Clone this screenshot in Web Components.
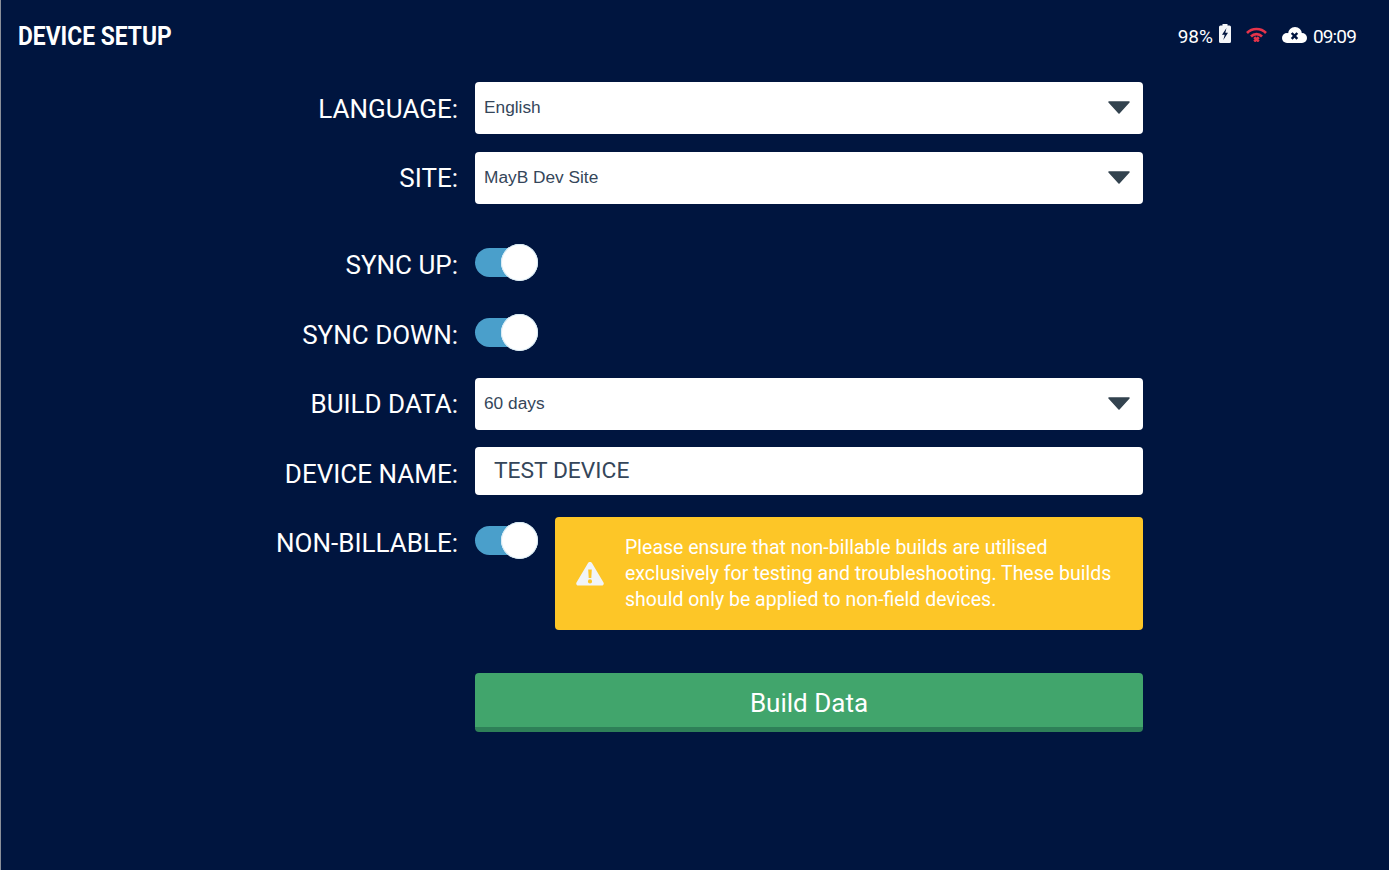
<!DOCTYPE html>
<html>
<head>
<meta charset="utf-8">
<title>Device Setup</title>
<style>
	html, body { margin: 0; height: 100%; }
	body {
		background: #00153f;
		border-left: 1px solid #8a8f99;
		box-sizing: border-box;
		height: 870px;
		overflow: hidden;
		color: #fff;
		font-family: Roboto, "Liberation Sans", sans-serif;
	}
</style>
</head>
<body>
<setup-header title-text="DEVICE SETUP" battery="98%" time="09:09"></setup-header>
<setup-form>
	<form-row label="LANGUAGE:" style="--label-top:1px"><select-box value="English"></select-box></form-row>
	<form-row label="SITE:" style="--row-gap:18px"><select-box value="MayB Dev Site"></select-box></form-row>
	<form-row label="SYNC UP:" style="--row-gap:40px;--label-top:4px"><toggle-switch></toggle-switch></form-row>
	<form-row label="SYNC DOWN:" style="--row-gap:33px;--label-top:4px"><toggle-switch></toggle-switch></form-row>
	<form-row label="BUILD DATA:" style="--row-gap:27px"><select-box value="60 days"></select-box></form-row>
	<form-row label="DEVICE NAME:" style="--row-gap:17px;--label-top:6px"><text-box value="TEST DEVICE"></text-box></form-row>
	<form-row label="NON-BILLABLE:" style="--row-gap:22px;--label-align:start;--label-top:11px">
		<div style="display:flex;align-items:flex-start;gap:17px">
			<toggle-switch style="margin-top:5px"></toggle-switch>
			<warning-box>Please ensure that non-billable builds are utilised exclusively for testing and troubleshooting. These builds should only be applied to non-field devices.</warning-box>
		</div>
	</form-row>
	<form-row style="--row-gap:43px"><build-button>Build Data</build-button></form-row>
</setup-form>
<script>
const html = String.raw;

function define(name, markup, init) {
	const template = document.createElement("template");
	template.innerHTML = markup;
	customElements.define(name, class extends HTMLElement {
		constructor() {
			super();
			this.attachShadow({ mode: "open" });
			this.shadowRoot.appendChild(template.content.cloneNode(true));
		}
		connectedCallback() {
			if (init) init(this, this.shadowRoot);
		}
	});
}

define("setup-header", html`
	<style>
		:host { display: flex; align-items: center; justify-content: space-between; height: 82px; padding: 0 33px 10px 17px; box-sizing: border-box; }
		h1 { margin: 0; font: 700 25.5px Roboto, sans-serif; transform: scaleX(.895); transform-origin: left; white-space: nowrap; }
		.status { display: flex; align-items: center; font-size: 19px; }
		#time { letter-spacing: -.85px; margin-left: 6px; }
		svg { display: block; flex: none; }
	</style>
	<h1 id="title"></h1>
	<div class="status">
		<span id="battery"></span>
		<svg width="12" height="19" viewBox="0 0 12 19" style="margin:-5px 0 0 6px">
			<path fill="#f4f6f9" fill-rule="evenodd" d="M3.500 0h5v1.500h2A1.500 1.500 0 0 1 12 3v14.500a1.500 1.500 0 0 1-1.500 1.500h-9A1.500 1.500 0 0 1 0 17.500V3a1.500 1.500 0 0 1 1.500-1.500h2zM7.500 4 3 10.800h2.700L4.300 16l4.700-7.200H6.300z"/>
		</svg>
		<svg width="21" height="15" viewBox="0 0 21 15" style="margin:-3px 0 0 15px" fill="none" stroke="#e5344a" stroke-width="2.600">
			<path d="M1 6C6 .700 15 .700 20 6"/>
			<path d="M5 9.500C8 6.300 13 6.300 16 9.500"/>
			<path d="M8.200 10.200 12.800 14.500M12.800 10.200 8.200 14.500"/>
		</svg>
		<svg width="25" height="16" viewBox="0 0 25 16" style="margin:-2px 0 0 15px">
			<g fill="#fff"><circle cx="5" cy="11" r="5"/><circle cx="13" cy="7" r="7"/><circle cx="20" cy="11" r="5"/><rect x="5" y="9" width="15" height="7"/></g>
			<path d="M9.700 6 15.300 11.800M15.300 6 9.700 11.800" stroke="#00153f" stroke-width="2.500"/>
		</svg>
		<span id="time"></span>
	</div>
`, (el, root) => {
	root.getElementById("title").textContent = el.getAttribute("title-text");
	root.getElementById("battery").textContent = el.getAttribute("battery");
	root.getElementById("time").textContent = el.getAttribute("time");
});

define("setup-form", html`
	<style>:host { display: block; }</style>
	<slot></slot>
`);

define("form-row", html`
	<style>
		:host { display: grid; grid-template-columns: 457px 668px; column-gap: 17px; margin-top: var(--row-gap, 0); }
		.label { align-self: var(--label-align, center); text-align: right; font-size: 26px; padding-top: var(--label-top, 0); white-space: nowrap; }
	</style>
	<div class="label" id="label"></div>
	<div><slot></slot></div>
`, (el, root) => {
	root.getElementById("label").textContent = el.getAttribute("label") || "";
});

define("select-box", html`
	<style>
		:host { display: flex; align-items: center; justify-content: space-between; height: 52px; box-sizing: border-box; padding: 0 13px 2px 9px; background: #fff; border-radius: 4px; color: #35465a; font: 17.3px "Liberation Sans", Arial, sans-serif; }
		svg { display: block; }
	</style>
	<span id="value"></span>
	<svg width="22" height="13" viewBox="0 0 22 13"><path fill="#33434f" stroke="#33434f" stroke-width="1.500" stroke-linejoin="round" d="M1 1h20L11 12z"/></svg>
`, (el, root) => {
	root.getElementById("value").textContent = el.getAttribute("value");
});

define("text-box", html`
	<style>
		:host { display: flex; align-items: center; height: 48px; box-sizing: border-box; padding: 0 19px 2px; background: #fff; border-radius: 4px; color: #35465a; font-size: 22.8px; }
	</style>
	<span id="value"></span>
`, (el, root) => {
	root.getElementById("value").textContent = el.getAttribute("value");
});

define("toggle-switch", html`
	<style>
		:host { display: flex; align-items: center; flex: none; width: 63px; height: 37px; position: relative; }
		.track { width: 58px; height: 29px; border-radius: 15px; background: #4a9fcb; }
		.knob { position: absolute; right: 0; top: 0; width: 37px; height: 37px; border-radius: 50%; background: #fff; box-shadow: inset 0 0 0 1px #d8ebf4; }
	</style>
	<div class="track"></div><div class="knob"></div>
`);

define("warning-box", html`
	<style>
		:host { display: flex; align-items: center; flex: 1; height: 113px; box-sizing: border-box; padding: 0 20px 0 21px; gap: 21px; background: #fdc627; border-radius: 4px; color: #fff; font-size: 19.5px; line-height: 26px; }
		svg { flex: none; display: block; }
	</style>
	<svg width="28" height="24" viewBox="0 0 28 24">
		<path fill="#f1f4f8" fill-rule="evenodd" d="M14 0c.9 0 1.700.5 2.100 1.300l11.400 19.200c.8 1.400-.2 3.100-1.800 3.100H2.300C.7 23.600-.3 21.900.5 20.500L11.900 1.300C12.300.5 13.100 0 14 0zM12.200 7.500l.5 8.500h2.600l.5-8.500zM14 17.300a2.100 2.100 0 1 0 0 4.200 2.100 2.100 0 0 0 0-4.200z"/>
	</svg>
	<div><slot></slot></div>
`);

define("build-button", html`
	<style>
		:host { display: flex; align-items: center; justify-content: center; height: 59px; box-sizing: border-box; padding-top: 5px; background: #41a56c; border-bottom: 5px solid #2e8058; border-radius: 4px; color: #fff; font-size: 26px; font-weight: 400; }
	</style>
	<slot></slot>
`);
</script>
</body>
</html>
